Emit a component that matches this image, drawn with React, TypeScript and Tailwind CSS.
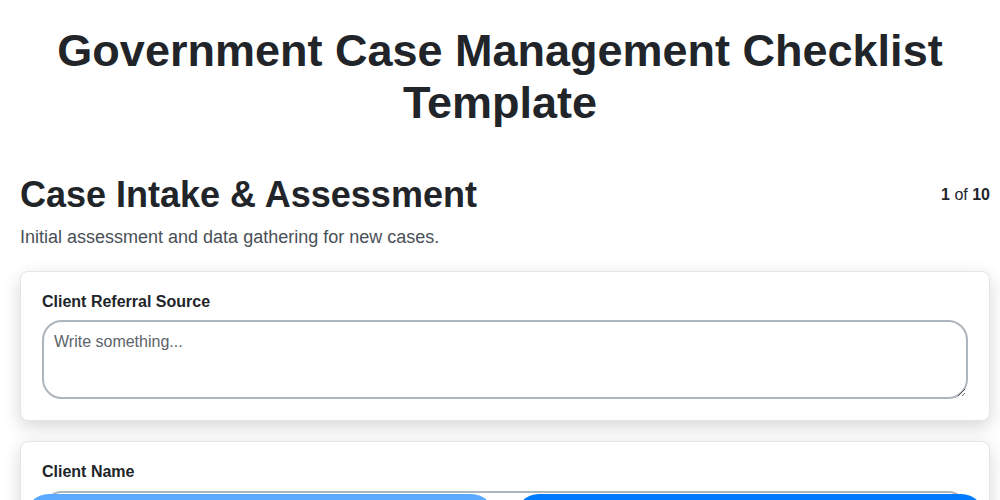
import React from "react";

const fields = [
  { label: "Client Referral Source", placeholder: "Write something..." },
  { label: "Client Name", placeholder: "Write something..." },
];

const App = () => {
  return (
    <div className="min-h-screen bg-white text-[#212529] font-['Liberation_Sans',Arial,sans-serif]">
      {/* Page title */}
      <h1 className="pt-[25px] mb-[44px] text-center text-[45px] leading-[52px] font-bold">
        Government Case Management Checklist
        <br />
        Template
      </h1>

      <section className="pl-5 pr-2.5 pb-32">
        {/* Step header */}
        <div className="flex items-center justify-between mb-2">
          <h2 className="text-[36px] leading-[1.2] font-bold">Case Intake &amp; Assessment</h2>
          <span className="text-base leading-6">
            <b>1</b> of <b>10</b>
          </span>
        </div>
        <p className="text-[18px] leading-[27px] text-[#495057] mb-5">
          Initial assessment and data gathering for new cases.
        </p>

        {/* Fields */}
        <div className="flex flex-col gap-5">
          {fields.map((f) => (
            <div
              key={f.label}
              className="bg-white border border-[#e4e4ec] rounded-lg pt-5 pb-[21px] px-[21px] shadow-[0_6px_18px_rgba(0,0,0,0.16)]"
            >
              <label className="block text-base leading-[1.2] font-bold mb-[9px]">{f.label}</label>
              <textarea
                placeholder={f.placeholder}
                className="block w-full h-[79px] border-2 border-[#adb5bd] rounded-[20px] px-2.5 py-2 text-base leading-6 text-[#212529] placeholder:text-[#5c636a] outline-none"
              />
            </div>
          ))}
        </div>
      </section>

      <div className="fixed left-0 right-0 top-[494px] flex gap-5 pl-[25px] pr-[15px]">
        <button aria-label="Previous" className="flex-1 h-12 rounded-full bg-[#59a9ff]" />
        <button aria-label="Next" className="flex-1 h-12 rounded-full bg-[#007bff]" />
      </div>
    </div>
  );
};

export default App;
